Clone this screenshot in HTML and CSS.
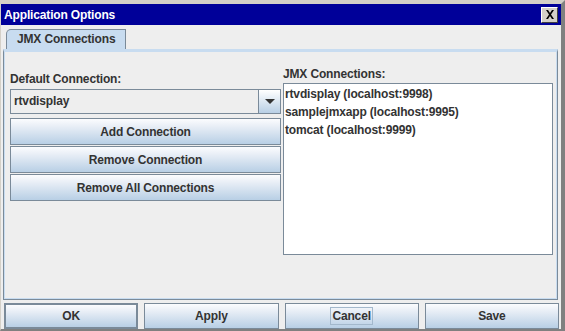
FILE: index.html
```html
<!DOCTYPE html>
<html>
<head>
<meta charset="utf-8">
<link rel="stylesheet" href="styles.css">
</head>
<body>
<div class="window">
  <div class="titlebar">
    <span class="title">Application Options</span>
    <span class="close"><svg width="10" height="9" viewBox="0 0 10 9"><path d="M1 0h2l2 3 2-3h2l-3 4.5 3 4.5h-2l-2-3-2 3h-2l3-4.5z" fill="#000"/></svg></span>
  </div>
  <div class="body">
    <div class="tabs"><div class="tab">JMX Connections</div></div>
    <div class="panel">
      <div class="left">
        <div class="label">Default Connection:</div>
        <div class="combo">
          <div class="combo-text">rtvdisplay</div>
          <div class="combo-btn"><svg width="10" height="5" viewBox="0 0 10 5"><path d="M0 0h10l-5 5z" fill="#333"/></svg></div>
        </div>
        <div class="btn">Add Connection</div>
        <div class="btn">Remove Connection</div>
        <div class="btn">Remove All Connections</div>
      </div>
      <div class="right">
        <div class="label">JMX Connections:</div>
        <div class="list">
          <div class="item">rtvdisplay (localhost:9998)</div>
          <div class="item">samplejmxapp (localhost:9995)</div>
          <div class="item">tomcat (localhost:9999)</div>
        </div>
      </div>
    </div>
    <div class="footer">
      <div class="btn fbtn default">OK</div>
      <div class="btn fbtn">Apply</div>
      <div class="btn fbtn"><span class="focus">Cancel</span></div>
      <div class="btn fbtn">Save</div>
    </div>
  </div>
</div>
</body>
</html>
```
FILE: styles.css
```css
html, body { margin: 0; padding: 0; }
body {
  width: 565px; height: 331px; overflow: hidden;
  font-family: "Liberation Sans", Arial, sans-serif;
  font-size: 12px; font-weight: bold; color: #333;
  letter-spacing: -0.15px;
  background: #c0c0c0;
}
.window {
  box-sizing: border-box;
  width: 565px; height: 331px;
  border-top: 4px solid #d4d0c8;
  border-left: 1px solid #d4d0c8;
  border-right: 4px solid #808080;
  border-bottom: 2px solid #808080;
  background: #eeeeee;
  display: flex; flex-direction: column;
}
.titlebar {
  height: 21px; background: #000099; color: #fff;
  display: flex; align-items: center; justify-content: space-between;
  padding: 0 3px 0 3px; font-size: 12px;
}
.title { font-weight: bold; }
.close {
  width: 15px; height: 14px; background: #d4d0c8;
  border: 1px solid; border-color: #fff #404040 #404040 #fff;
  display: flex; align-items: center; justify-content: center;
}
.body { flex: 1; display: flex; flex-direction: column; padding: 4px 3px 0 2px; }
.tabs { display: flex; padding-left: 3px; height: 20px; }
.tab {
  width: 120px; height: 20px; box-sizing: border-box; padding-left: 10px;
  background: #c8dcf0; border: 1px solid #7a8a99; border-bottom: none;
  border-radius: 5px 0 0 0; line-height: 19px; color: #333; white-space: nowrap;
}
.panel {
  flex: 1; display: flex; gap: 2px;
  border: 1px solid #7a8a99; border-top: 3px solid #c8dcf0;
  box-shadow: inset 1px 0 0 #c8dcf0, inset -1px 0 0 #c8dcf0, inset 0 -1px 0 #c8dcf0;
  padding: 17px 4px 44px 6px;
}
.left { width: 271px; display: flex; flex-direction: column; }
.right { flex: 1; display: flex; flex-direction: column; }
.label { height: 20px; line-height: 20px; }
.right .label { height: 14px; line-height: 10px; }
.combo {
  height: 25px; box-sizing: border-box; border: 1px solid #7a8a99;
  display: flex; background: #eeeeee; margin-bottom: 4px;
}
.combo-text {
  flex: 1; margin: 2px; background: #eeeeee; line-height: 19px; padding-left: 1px;
}
.combo-btn {
  width: 21px; border-left: 1px solid #7a8a99;
  background: linear-gradient(#ffffff, #b8cfe5);
  display: flex; align-items: center; justify-content: center;
}
.btn {
  height: 27px; box-sizing: border-box; border: 1px solid #7a8a99;
  background: linear-gradient(#fbfcfe 0%, #e8eef6 30%, #b8cfe5 100%);
  display: flex; align-items: center; justify-content: center;
  margin-bottom: 1px; color: #333;
}
.list {
  flex: 1; background: #fff; border: 1px solid #7a8a99; padding: 1px 0 0 1px;
}
.item { height: 18px; line-height: 18px; }
.footer {
  display: grid; grid-template-columns: repeat(4, 1fr); column-gap: 6px;
  padding: 3px 0 0 1px; margin-right: -1px; height: 29px; box-sizing: border-box;
}
.fbtn { height: 26px; margin: 0; }
.fbtn.default { border: 2px solid #7a8a99; }
.focus { border: 1px solid #a3b8cc; padding: 0 1px; line-height: 16px; }
```
